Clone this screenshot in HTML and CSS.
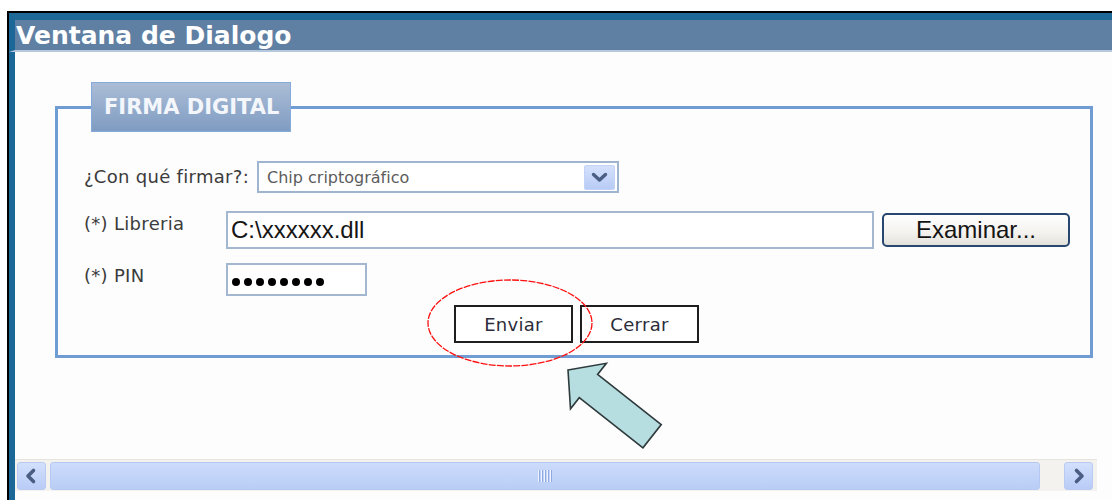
FILE: index.html
```html
<!DOCTYPE html>
<html lang="es">
<head>
<meta charset="utf-8">
<title>Ventana de Dialogo</title>
<link rel="stylesheet" href="styles.css">
</head>
<body>
<div class="window">
  <div class="titlebar"><span class="title">Ventana de Dialogo</span></div>
  <div class="client">
    <fieldset class="sign-box">
      <legend class="sign-legend">FIRMA DIGITAL</legend>
      <div class="sign-body">
        <div class="row-method">
          <label class="lbl">¿Con qué firmar?:</label>
          <div class="select">
            <span class="select-text">Chip criptográfico</span>
            <span class="select-btn">
              <svg width="31" height="25" viewBox="0 0 31 25"><polyline points="9.5,9.5 15.5,15 21.5,9.5" fill="none" stroke="#4a5e84" stroke-width="3.4" stroke-linecap="round" stroke-linejoin="round"/></svg>
            </span>
          </div>
        </div>
        <div class="row-field row-lib">
          <label class="lbl lbl-col">(*) Libreria</label>
          <div class="textbox textbox-lib">C:\xxxxxx.dll</div>
          <button class="browse-btn" type="button">Examinar...</button>
        </div>
        <div class="row-field row-pin">
          <label class="lbl lbl-col">(*) PIN</label>
          <div class="textbox textbox-pin">
            <span class="dot"></span><span class="dot"></span><span class="dot"></span><span class="dot"></span><span class="dot"></span><span class="dot"></span><span class="dot"></span><span class="dot"></span>
          </div>
        </div>
        <div class="actions">
          <button class="act-btn" type="button">Enviar</button>
          <button class="act-btn" type="button">Cerrar</button>
        </div>
      </div>
    </fieldset>

    <div class="hscroll">
      <span class="sb-btn">
        <svg width="29" height="28" viewBox="0 0 29 28"><polyline points="16.5,8.5 11,14 16.5,19.5" fill="none" stroke="#4a5e84" stroke-width="3.6" stroke-linecap="round" stroke-linejoin="round"/></svg>
      </span>
      <span class="sb-thumb">
        <span class="grip"><i></i><i></i><i></i><i></i><i></i></span>
      </span>
      <span class="sb-btn">
        <svg width="29" height="28" viewBox="0 0 29 28"><polyline points="12.5,8.5 18,14 12.5,19.5" fill="none" stroke="#4a5e84" stroke-width="3.6" stroke-linecap="round" stroke-linejoin="round"/></svg>
      </span>
    </div>
  </div>
</div>

<!-- hand-drawn marks over the dialog: circle around the send button and a pointer arrow -->
<svg class="marks" width="1112" height="500" viewBox="0 0 1112 500">
  <ellipse cx="510" cy="323" rx="82" ry="43" fill="none" stroke="#ff1010" stroke-width="1.3" stroke-dasharray="7 1.2"/>
  <g transform="translate(568 370) rotate(38.2)">
    <polygon points="0,0 26,-29 26,-14.8 107,-14.8 107,14.8 26,14.8 26,29" fill="#b6dde0" stroke="#2e3a3c" stroke-width="1.6" stroke-linejoin="miter"/>
  </g>
</svg>
</body>
</html>
```

FILE: styles.css
```css
html, body {
  margin: 0;
  padding: 0;
  overflow: hidden;
  background: #ffffff;
}

body {
  width: 1112px;
  height: 500px;
  font-family: "DejaVu Sans", Verdana, sans-serif;
}

/* dialog frame */
.window {
  margin: 11px 0 0 7px;
  border-top: 2px solid #000;
  border-left: 2px solid #000;
}

.titlebar {
  height: 30px;
  border-top: 7px solid #1e6997;
  border-bottom: 2px solid #b6c8db;
  border-left: 6px solid #1b6797;
  background: #5f80a3;
  padding-left: 1px;
}

.title {
  display: block;
  font-family: "DejaVu Sans", Verdana, sans-serif;
  font-weight: bold;
  font-size: 25px;
  line-height: 31px;
  color: #ffffff;
}

.client {
  border-left: 6px solid #1b6797;
  background: #fdfdfd;
  height: 448px;
  overflow: hidden;
}

/* signature group */
.sign-box {
  margin: 30px 19px 0 40px;
  padding: 0;
  border: 3px solid #6f9dd3;
  min-width: 0;
}

.sign-legend {
  box-sizing: border-box;
  width: 200px;
  height: 50px;
  margin-left: 33px;
  padding: 0 0 0 12px;
  border: 1px solid #86abdb;
  background: linear-gradient(#abbdd6, #7f9cc2);
  color: #f3f6fb;
  font-family: "DejaVu Sans", Verdana, sans-serif;
  font-weight: bold;
  font-size: 21px;
  line-height: 48px;
  text-align: left;
  white-space: nowrap;
}

.sign-body {
  padding: 29px 0 12px 26px;
}

.lbl {
  font-size: 18px;
  line-height: 20px;
  color: #3b3b3b;
  letter-spacing: 0.3px;
}

.row-method {
  display: flex;
  align-items: center;
  height: 32px;
}

.select {
  box-sizing: border-box;
  width: 362px;
  height: 32px;
  margin-left: 8px;
  border: 2px solid #9fb4cf;
  background: #fff;
  display: flex;
  align-items: center;
  justify-content: space-between;
  padding: 0 2px 0 8px;
}

.select-text {
  font-size: 16px;
  color: #5c5c5c;
}

.select-btn {
  display: block;
  width: 31px;
  height: 25px;
  border-radius: 3px;
  background: linear-gradient(#d6e2fd, #b7caf5);
  box-shadow: inset 0 0 0 1px #c3d3f7;
}

.select-btn svg {
  display: block;
}

.row-field {
  display: flex;
  align-items: center;
}

.row-lib {
  margin-top: 18px;
}

.row-pin {
  margin-top: 14px;
}

.lbl-col {
  width: 142px;
  flex: none;
  align-self: flex-start;
  padding-top: 3px;
}

.textbox {
  box-sizing: border-box;
  border: 2px solid #a3b7d1;
  background: #fff;
}

.textbox-lib {
  width: 648px;
  height: 38px;
  padding-left: 3px;
  font-family: "Liberation Sans", Arial, sans-serif;
  font-size: 24px;
  line-height: 34px;
  color: #151515;
}

.browse-btn {
  box-sizing: border-box;
  width: 188px;
  height: 34px;
  margin-left: 8px;
  padding: 0;
  border: 2px solid #27476f;
  border-radius: 5px;
  background: linear-gradient(#ffffff, #f3f2ee 60%, #e3e1da);
  font-family: "Liberation Sans", Arial, sans-serif;
  font-size: 24px;
  line-height: 30px;
  color: #141414;
}

.textbox-pin {
  width: 141px;
  height: 33px;
  padding: 4px 0 0 4px;
  display: flex;
  align-items: center;
}

.dot {
  width: 8px;
  height: 8px;
  border-radius: 50%;
  background: #000;
  margin-right: 4px;
  flex: none;
}

.actions {
  display: flex;
  justify-content: center;
  gap: 7px;
  margin-top: 9px;
  margin-left: -21px;
}

.act-btn {
  box-sizing: border-box;
  width: 119px;
  height: 38px;
  padding: 0;
  border: 2px solid #1e1e1e;
  background: #fff;
  font-family: "DejaVu Sans", Verdana, sans-serif;
  font-size: 18px;
  letter-spacing: 0.3px;
  color: #2c2c3a;
}

/* horizontal scrollbar of the frame */
.hscroll {
  box-sizing: border-box;
  display: flex;
  height: 32px;
  margin: 101px 15px 0 0;
  padding: 2px 4px 1px 2px;
  background: #f3f2ee;
  border-top: 1px solid #e6e4dc;
}

.sb-btn {
  box-sizing: border-box;
  width: 29px;
  height: 28px;
  flex: none;
  border-radius: 3px;
  border: 1px solid #b9cbf3;
  background: linear-gradient(#d3e0fd, #b9ccf6);
}

.sb-btn svg {
  display: block;
  margin: -1px;
}

.sb-thumb {
  box-sizing: border-box;
  flex: 1;
  height: 28px;
  margin: 0 24px 0 4px;
  border-radius: 3px;
  border: 1px solid #b6c9f3;
  background: linear-gradient(#cddbfc, #c2d4f8 50%, #b9cdf5);
  display: flex;
  align-items: center;
  justify-content: center;
}

.grip {
  display: flex;
  gap: 1px;
  height: 12px;
}

.grip i {
  display: block;
  width: 1px;
  height: 12px;
  background: #eef3fe;
  box-shadow: 1px 0 0 #8ea8e0;
  margin-right: 1px;
}

.marks {
  position: absolute;
  left: 0;
  top: 0;
  pointer-events: none;
}
```
